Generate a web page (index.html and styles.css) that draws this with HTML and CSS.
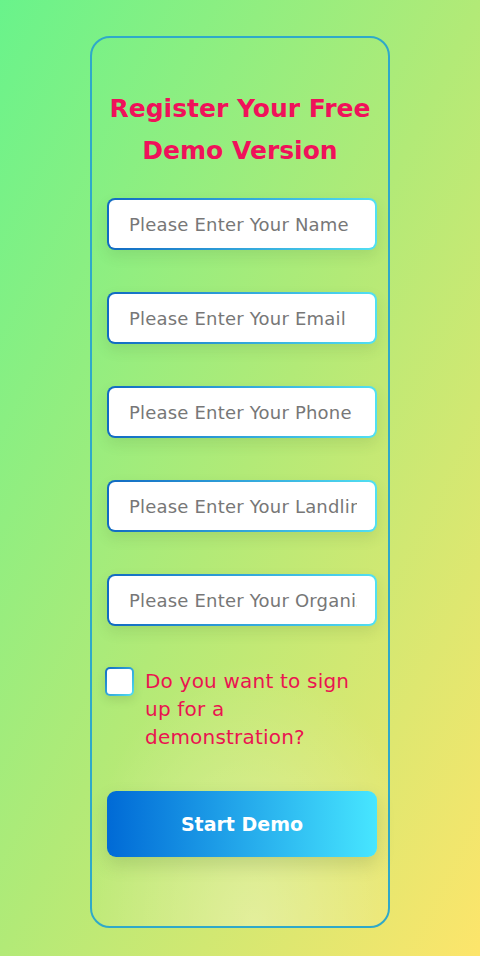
FILE: index.html
```html
<!DOCTYPE html>
<html lang="en">
<head>
<meta charset="utf-8">
<title>Register Demo</title>
<link rel="stylesheet" href="styles.css">
</head>
<body>
<main class="page">
  <form class="card">
    <h1 class="title">Register Your Free Demo Version</h1>
    <div class="fields">
      <input class="field" type="text" placeholder="Please Enter Your Name">
      <input class="field" type="email" placeholder="Please Enter Your Email">
      <input class="field" type="tel" placeholder="Please Enter Your Phone">
      <input class="field" type="tel" placeholder="Please Enter Your Landline">
      <input class="field" type="text" placeholder="Please Enter Your Organization">
    </div>
    <label class="check-row">
      <span class="check-box"></span>
      <span class="check-text">Do you want to sign up for a demonstration?</span>
    </label>
    <button class="submit" type="button">Start Demo</button>
  </form>
</main>
</body>
</html>
```
FILE: styles.css
```css
html, body {
  margin: 0;
  padding: 0;
}
body {
  min-height: 956px;
  background: linear-gradient(to bottom right, #69f38b 0%, #b2ea77 50%, #fde56b 100%);
  font-family: "DejaVu Sans", "Open Sans", sans-serif;
}
.page {
  display: flex;
  justify-content: center;
  padding-top: 36px;
}
.card {
  box-sizing: border-box;
  width: 300px;
  height: 892px;
  border: 2px solid #2fa9c9;
  border-radius: 20px;
  padding: 50px 10px 0 15px;
  background: radial-gradient(ellipse 60% 30% at 55% 100%, rgba(255,255,255,0.3), rgba(255,255,255,0) 100%);
  display: flex;
  flex-direction: column;
}
.title {
  margin: 0;
  text-align: center;
  font-size: 25px;
  line-height: 42px;
  font-weight: 600;
  color: #f0115a;
  padding-right: 5px;
}
.fields {
  margin-top: 26px;
  display: flex;
  flex-direction: column;
  gap: 42px;
}
.field {
  box-sizing: border-box;
  width: 270px;
  height: 52px;
  padding: 0 18px 0 20px;
  border: 2px solid transparent;
  border-radius: 8px;
  background: linear-gradient(#fff, #fff) padding-box, linear-gradient(90deg, #1169c2, #52e0f2) border-box;
  box-shadow: 0 6px 14px rgba(60, 90, 40, 0.12);
  font-family: inherit;
  font-size: 18px;
  letter-spacing: 0.2px;
  color: #333;
  outline: none;
}
.field::placeholder {
  color: #777;
}
.check-row {
  margin-top: 41px;
  margin-left: -2px;
  display: flex;
  gap: 11px;
  align-items: flex-start;
}
.check-box {
  flex: none;
  box-sizing: border-box;
  width: 29px;
  height: 29px;
  border: 2px solid transparent;
  border-radius: 5px;
  background: linear-gradient(#fff, #fff) padding-box, linear-gradient(135deg, #1169c2, #52e0f2) border-box;
  box-shadow: 0 4px 10px rgba(60, 90, 40, 0.15);
}
.check-text {
  width: 232px;
  font-size: 20px;
  letter-spacing: 0.2px;
  line-height: 28px;
  color: #ea1450;
}
.submit {
  margin-top: 40px;
  width: 270px;
  height: 66px;
  border: none;
  border-radius: 9px;
  background: linear-gradient(90deg, #006ad6, #47e6ff);
  box-shadow: 0 8px 18px rgba(60, 90, 40, 0.18);
  color: #fff;
  font-family: inherit;
  font-size: 19px;
  font-weight: bold;
  cursor: pointer;
}
```
